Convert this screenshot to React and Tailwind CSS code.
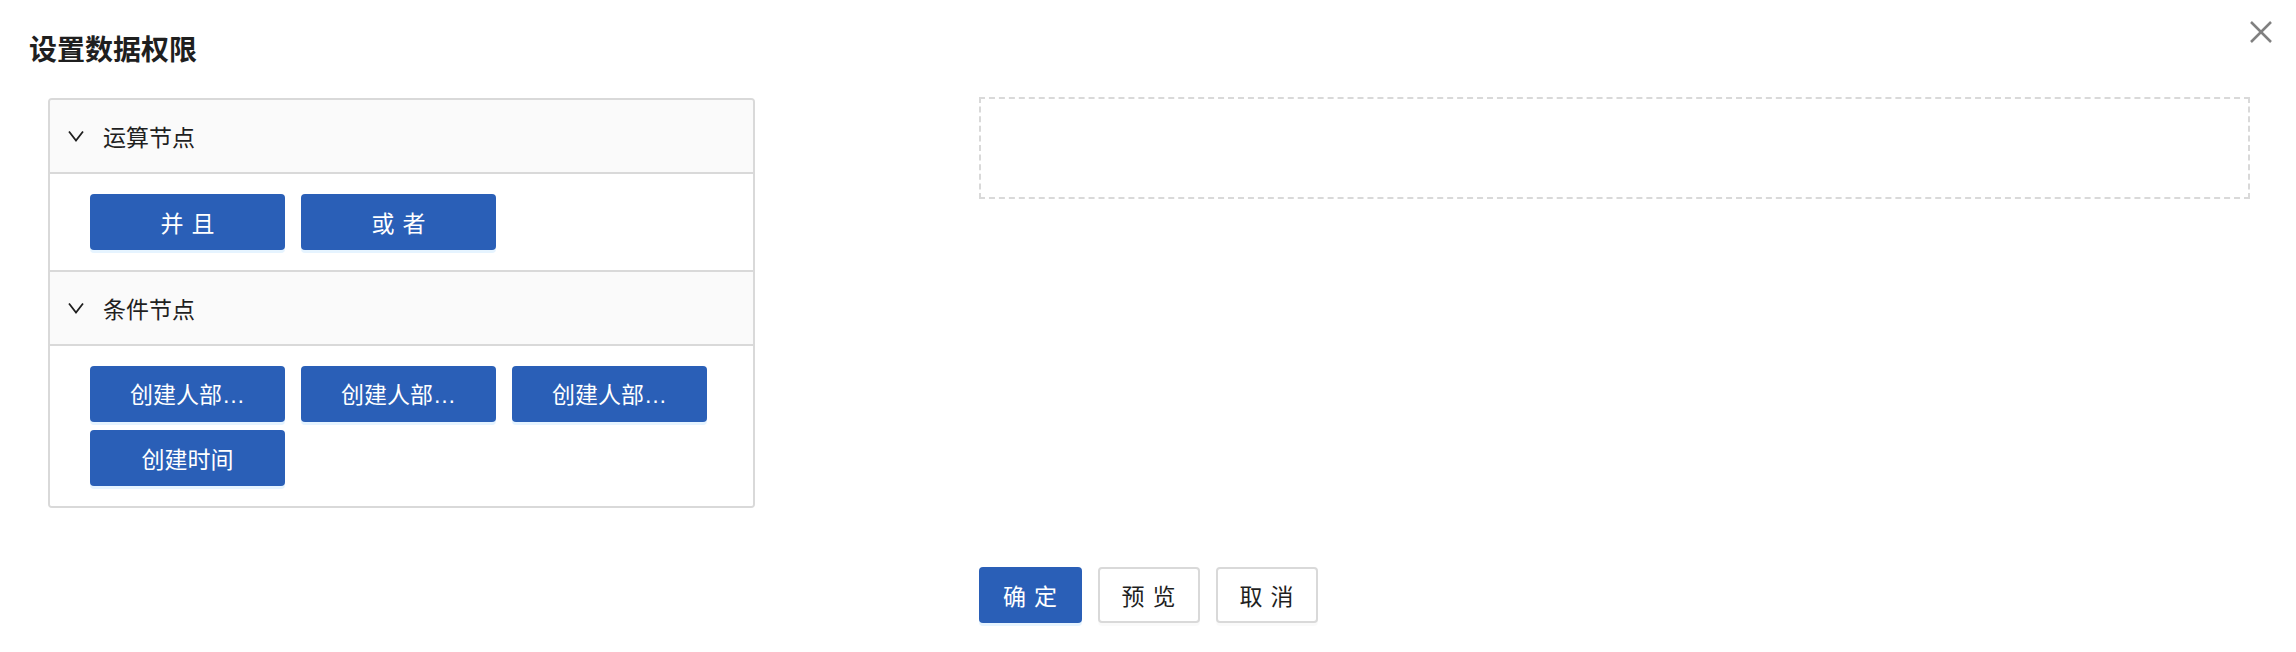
import React from "react";

const font = { fontFamily: '"Noto Sans CJK SC", "Noto Sans", sans-serif' };

function Chevron() {
  return (
    <svg width="16" height="12" viewBox="0 0 16 12" className="shrink-0">
      <polyline points="1,1.5 8,10.5 15,1.5" fill="none" stroke="#1f1f1f" strokeWidth="1.8" strokeLinejoin="miter" />
    </svg>
  );
}

function NodeButton({ children, spaced }) {
  return (
    <div className="w-[195px] h-[56px] rounded-[4px] bg-[#2a5fb7] shadow-[0_3px_0_rgba(5,145,255,0.1)] flex items-center justify-center text-white text-[23px] leading-none">
      {spaced ? <span className="tracking-[0.34em] -mr-[0.34em]">{children}</span> : <span>{children}</span>}
    </div>
  );
}

function Trunc({ text }) {
  return (
    <>
      {text}
      <span className="font-['Liberation_Sans',sans-serif]">…</span>
    </>
  );
}

function Section({ title, children, last }) {
  return (
    <div>
      <div className="h-[74px] bg-[#fafafa] border-b-2 border-[#d9d9d9] flex items-center pl-[18px] gap-[19px]">
        <Chevron />
        <span className="text-[23px] leading-none text-[#1f1f1f]">{title}</span>
      </div>
      <div className={"pl-[40px] pr-[20px] pt-[20px] pb-[20px] flex flex-wrap gap-x-4 gap-y-2 bg-white" + (last ? "" : " border-b-2 border-[#d9d9d9]")}>
        {children}
      </div>
    </div>
  );
}

export default function App() {
  return (
    <div className="relative w-[2296px] h-[652px] bg-white" style={font}>
      <div className="absolute right-[24px] top-[21px]">
        <svg width="22" height="22" viewBox="0 0 22 22">
          <line x1="1" y1="1" x2="21" y2="21" stroke="#808080" strokeWidth="2.5" />
          <line x1="21" y1="1" x2="1" y2="21" stroke="#808080" strokeWidth="2.5" />
        </svg>
      </div>
      <div className="pt-[28px] pl-[29px] h-[68px]">
        <div className="text-[28px] leading-[40px] font-bold text-[#1f1f1f]">设置数据权限</div>
      </div>
      <div className="mt-[30px] pl-[48px] pr-[46px] flex items-start gap-[224px]">
        <div className="w-[707px] border-2 border-[#d9d9d9] rounded-[4px] overflow-hidden">
          <Section title="运算节点">
            <NodeButton spaced>并且</NodeButton>
            <NodeButton spaced>或者</NodeButton>
          </Section>
          <Section title="条件节点" last>
            <NodeButton><Trunc text="创建人部" /></NodeButton>
            <NodeButton><Trunc text="创建人部" /></NodeButton>
            <NodeButton><Trunc text="创建人部" /></NodeButton>
            <NodeButton>创建时间</NodeButton>
          </Section>
        </div>
        <div className="flex-1 h-[102px] -mt-[1px] border-2 border-dashed border-[#d9d9d9]"></div>
      </div>
      <div className="mt-[59px] flex justify-center gap-4">
        <div className="w-[103px] h-[56px] rounded-[4px] bg-[#2a5fb7] shadow-[0_3px_0_rgba(5,145,255,0.1)] flex items-center justify-center text-white text-[23px] leading-none">
          <span className="tracking-[0.34em] -mr-[0.34em]">确定</span>
        </div>
        <div className="w-[102px] h-[56px] rounded-[4px] bg-white border-2 border-[#d9d9d9] shadow-[0_3px_0_rgba(0,0,0,0.02)] flex items-center justify-center text-[#1f1f1f] text-[23px] leading-none">
          <span className="tracking-[0.34em] -mr-[0.34em]">预览</span>
        </div>
        <div className="w-[102px] h-[56px] rounded-[4px] bg-white border-2 border-[#d9d9d9] shadow-[0_3px_0_rgba(0,0,0,0.02)] flex items-center justify-center text-[#1f1f1f] text-[23px] leading-none">
          <span className="tracking-[0.34em] -mr-[0.34em]">取消</span>
        </div>
      </div>
    </div>
  );
}
